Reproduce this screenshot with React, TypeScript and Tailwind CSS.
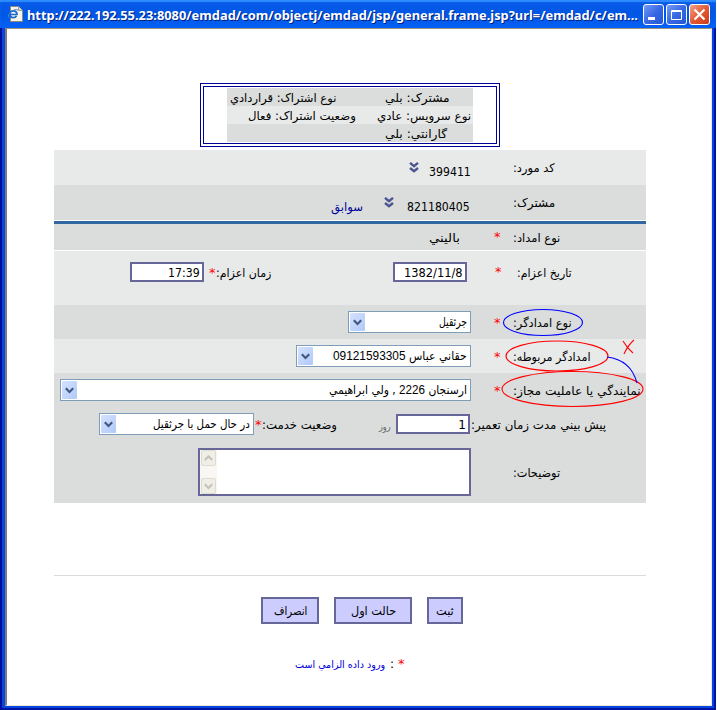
import { useLayoutEffect, useRef, type ReactNode } from "react";

/* One line of text, condensed or widened to fill its box exactly. */
function Fit({ children, className = "", ltr = false }: { children: ReactNode; className?: string; ltr?: boolean }) {
  const box = useRef<HTMLDivElement>(null);
  const text = useRef<HTMLSpanElement>(null);
  useLayoutEffect(() => {
    if (box.current && text.current) {
      text.current.style.transform = `scaleX(${box.current.clientWidth / text.current.offsetWidth})`;
    }
  }, []);
  return (
    <div ref={box} dir="ltr" className={`flex h-4 shrink-0 leading-4 ${className}`}>
      <span ref={text} dir={ltr ? "ltr" : "rtl"} className="block shrink-0 origin-left whitespace-nowrap">
        {children}
      </span>
    </div>
  );
}

function Star({ className = "" }: { className?: string }) {
  return <span className={`block h-4 w-[7px] shrink-0 text-[13px] leading-4 text-[#f00] ${className}`}>*</span>;
}

function DoubleChevron({ className }: { className: string }) {
  return (
    <svg className={`h-[11px] w-[10px] shrink-0 ${className}`} viewBox="0 0 10 11" fill="none" stroke="#4d5590" strokeWidth="2.4">
      <path d="M1 0.9 5 4.2 9 0.9M1 6 5 9.3 9 6" />
    </svg>
  );
}

function Select({ children, className }: { children: ReactNode; className: string }) {
  return (
    <div className={`flex h-[22px] shrink-0 justify-between border border-[#7f9db9] bg-white p-px ${className}`}>
      <span className="flex h-[18px] w-[15px] items-center justify-center rounded-[1px] bg-linear-to-br from-[#d5e2ff] to-[#b0c9f8]">
        <svg className="h-[7px] w-[9px]" viewBox="0 0 9 7" fill="none" stroke="#40587f" strokeWidth="2.1">
          <path d="M.8 1.2 4.5 4.9 8.2 1.2" />
        </svg>
      </span>
      {children}
    </div>
  );
}

function Input({ children, className }: { children: ReactNode; className: string }) {
  return (
    <div className={`flex h-5 w-[74px] shrink-0 justify-end border-2 border-[#666699] bg-white pr-0.5 text-[12px] ${className}`}>
      {children}
    </div>
  );
}

function ScrollButton({ up = false }: { up?: boolean }) {
  return (
    <span className="flex h-4 w-[15px] items-center justify-center rounded-[2px] border border-[#dedccf] bg-[#efeee7]">
      <svg className="h-[7px] w-[9px]" viewBox="0 0 9 7" fill="none" stroke="#c4c2b8" strokeWidth="2">
        <path d={up ? "M.8 5 4.5 1.3 8.2 5" : "M.8 1.3 4.5 5 8.2 1.3"} />
      </svg>
    </span>
  );
}

function TitleBar() {
  return (
    <header className="flex h-[28px] items-start bg-linear-to-b from-[#0c5be8] via-[#0057e5] to-[#0560f5] pl-2 shadow-[inset_0_2px_1px_#2d8cff]">
      <svg className="mt-[6px] h-4 w-[15px]" viewBox="0 0 15 16">
        <path d="M2.5.5h8l4 4v11h-12z" fill="#f7f5e9" stroke="#8a8a80" />
        <path d="M10.5.5v4h4" fill="#ddd" stroke="#999" />
        <path d="M2 8.5h7C9 3.5 2 4 2 8.2c0 4.3 5 4.3 6.5 1.7" fill="none" stroke="#1667cf" strokeWidth="1.7" />
        <path d="M.5 11.5C-1 8 6 2 10 4" fill="none" stroke="#4387d8" />
      </svg>
      <Fit ltr className="mt-[7px] ml-1 w-[611px] font-['Noto_Sans',sans-serif] text-[13px] font-bold text-white [text-shadow:1px_1px_0_#002080]">
        http://222.192.55.23:8080/emdad/com/objectj/emdad/jsp/general.frame.jsp?url=/emdad/c/em...
      </Fit>
      <div className="mt-1 ml-[5px] flex gap-[2px]">
        <span className="h-[21px] w-[21px] rounded-[3px] border border-white bg-linear-to-br from-[#769bf3] via-[#3968e5] to-[#2256d5]">
          <svg viewBox="0 0 19 19"><path d="M4 12h7v3H4z" fill="white" /></svg>
        </span>
        <span className="h-[21px] w-[21px] rounded-[3px] border border-white bg-linear-to-br from-[#769bf3] via-[#3968e5] to-[#2256d5]">
          <svg viewBox="0 0 19 19"><path d="M4.5 5.5h10v9h-10zM4.5 6.5h10" fill="none" stroke="white" /></svg>
        </span>
        <span className="h-[21px] w-[21px] rounded-[3px] border border-white bg-linear-to-br from-[#f0a089] via-[#e35a35] to-[#cc3c12]">
          <svg viewBox="0 0 19 19"><path d="m4.5 4.5 10 10m0-10-10 10" stroke="white" strokeWidth="2.2" /></svg>
        </span>
      </div>
    </header>
  );
}

function Summary() {
  return (
    <div className="ml-[193px] h-16 w-[300px] border-4 border-double border-[#000099] pt-px pl-[23px]">
      <div className="w-[246px] text-[11.5px]">
        <div className="flex h-[18px] bg-[#dadddc] pt-0.5">
          <Fit className="ml-[3px] w-[106px]">نوع اشتراک: قراردادي</Fit>
          <Fit className="ml-[49px] w-[65px]">مشترک: بلي</Fit>
        </div>
        <div className="flex h-[18px] bg-[#e8eaea] pt-0.5">
          <Fit className="ml-[21px] w-[108px]">وضعيت اشتراک: فعال</Fit>
          <Fit className="ml-[21px] w-[94px]">نوع سرويس: عادي</Fit>
        </div>
        <div className="flex h-[18px] bg-[#dadddc] pt-0.5">
          <Fit className="ml-[158px] w-[62px]">گارانتي: بلي</Fit>
        </div>
      </div>
    </div>
  );
}

function Annotations() {
  return (
    <svg className="pointer-events-none absolute top-0 left-0 h-[710px] w-[717px]" viewBox="0 0 717 710" fill="none" strokeWidth="1.1">
      <ellipse cx="543" cy="322.5" rx="39.5" ry="13" stroke="#00f" />
      <ellipse cx="557" cy="356" rx="51" ry="15" stroke="#f00" />
      <ellipse cx="572.5" cy="389" rx="70.5" ry="17.5" stroke="#f00" />
      <path d="M607 357C624 359 633 368 637 383" stroke="#00f" />
      <path d="M623 341q4 7 10 12M634 340q-6 5-10 14" stroke="#f00" />
    </svg>
  );
}

export default function App() {
  return (
    <div dir="ltr" className="relative h-[710px] w-[717px] overflow-hidden bg-white font-['DejaVu_Sans',sans-serif] text-[12px] text-black">
      <div className="h-[710px] w-[716px] rounded-t-[4px] bg-[#0019a8]">
        <TitleBar />
        <div className="h-[682px] border-r-2 border-b-2 border-l-2 border-r-[#0014a0] border-b-[#0014a0] border-l-[#000f98] bg-[#0546e2] pr-0.5 pb-0.5 pl-[3px]">
          <main className="h-[678px] w-[707px] border-t border-r border-b border-l-2 border-t-[#9c9380] border-r-[#ece9d8] border-b-[#ece9d8] border-l-[#807b70] bg-white pt-[54px]">
            <Summary />
            <section className="mt-[3px] ml-[47px] w-[592px]">
              <div className="flex h-[35px] bg-[#e8eaea]">
                <DoubleChevron className="mt-[12px] ml-[355px]" />
                <Fit ltr className="mt-[14px] ml-[10px] w-[42px]">399411</Fit>
                <Fit className="mt-[10px] ml-[42px] w-[42px]">کد مورد:</Fit>
              </div>
              <div className="flex h-[35px] bg-[#dadddc]">
                <Fit className="mt-[14px] ml-[277px] w-[32px] text-[#000099]">سوابق</Fit>
                <DoubleChevron className="mt-[12px] ml-[21px]" />
                <Fit ltr className="mt-[14px] ml-[13px] w-[63px]">821180405</Fit>
                <Fit className="mt-[10px] ml-[43px] w-[42px]">مشترک:</Fit>
              </div>
              <div className="flex h-[31px] border-t border-b border-white bg-[#dadddc] shadow-[inset_0_3px_0_#3067a0]">
                <Fit className="mt-[9px] ml-[375px] w-[31px]">باليني</Fit>
                <Star className="mt-[8px] ml-[34px]" />
                <Fit className="mt-[9px] ml-[12px] w-[47px]">نوع امداد:</Fit>
              </div>
              <div className="flex h-[54px] bg-[#e8eaea]">
                <Input className="mt-[11px] ml-[76px]">
                  <Fit ltr className="mt-px w-[32px]">17:39</Fit>
                </Input>
                <Star className="mt-[14px] ml-[5px]" />
                <Fit className="mt-[14px] w-[55px]">زمان اعزام:</Fit>
                <Input className="mt-[11px] ml-[122px]">
                  <Fit ltr className="mt-px w-[59px]">1382/11/8</Fit>
                </Input>
                <Star className="mt-[13px] ml-[28px]" />
                <Fit className="mt-[14px] ml-[15px] w-[55px]">تاريخ اعزام:</Fit>
              </div>
              <div className="flex h-[34px] bg-[#dadddc]">
                <Select className="mt-[6px] ml-[294px] w-[123px]">
                  <Fit className="mt-px mr-0.5 w-[28px]">جرثقيل</Fit>
                </Select>
                <Star className="mt-[10px] ml-[23px]" />
                <Fit className="mt-[10px] ml-[12px] w-[59px]">نوع امدادگر:</Fit>
              </div>
              <div className="flex h-[34px] bg-[#e8eaea]">
                <Select className="mt-[6px] ml-[242px] w-[175px]">
                  <Fit className="mt-px mr-0.5 w-[134px]">
                    حقاني عباس <span className="font-['Liberation_Sans',sans-serif] text-[13px]">09121593305</span>
                  </Fit>
                </Select>
                <Star className="mt-[10px] ml-[23px]" />
                <Fit className="mt-[10px] ml-[12px] w-[78px]">امدادگر مربوطه:</Fit>
              </div>
              <div className="h-[130px] bg-[#dadddc]">
                <div className="flex h-[34px]">
                  <Select className="mt-[6px] ml-[6px] w-[411px]">
                    <Fit className="mt-px mr-0.5 w-[138px]">
                      ارسنجان <span className="font-['Liberation_Sans',sans-serif] text-[13px]">2226</span> , ولي ابراهيمي
                    </Fit>
                  </Select>
                  <Star className="mt-[10px] ml-[23px]" />
                  <Fit className="mt-[10px] ml-[12px] w-[128px]">نمايندگي يا عامليت مجاز:</Fit>
                </div>
                <div className="flex h-[41px]">
                  <Select className="mt-[6px] ml-[45px] w-[155px]">
                    <Fit className="mt-px mr-0.5 w-[97px]">در حال حمل با جرثقيل</Fit>
                  </Select>
                  <Star className="mt-[10px] ml-px" />
                  <Fit className="mt-[10px] w-[75px]">وضعيت خدمت:</Fit>
                  <Fit className="mt-[12px] ml-[42px] w-[12px] text-[10px] text-[#666]">روز</Fit>
                  <Input className="mt-[7px] ml-[5px]">
                    <span className="mt-px leading-4">1</span>
                  </Input>
                  <Fit className="mt-[10px] ml-px w-[135px]">پيش بيني مدت زمان تعمير:</Fit>
                </div>
                <div className="flex h-12">
                  <div className="ml-[144px] flex w-[273px] border-2 border-[#666699] bg-white">
                    <div className="flex w-[17px] flex-col items-center justify-between bg-[#f8f7f3]">
                      <ScrollButton up />
                      <ScrollButton />
                    </div>
                  </div>
                  <Fit className="mt-[17px] ml-[42px] w-[47px]">توضيحات:</Fit>
                </div>
              </div>
            </section>
            <hr className="mt-[72px] ml-[47px] w-[592px] border-t border-[#dcdcdc]" />
            <div className="mt-[21px] ml-[254px] flex gap-[15px]">
              <button className="flex h-[27px] w-[58px] justify-center border-2 border-[#666699] bg-[#ccccff] pt-[4px]">
                <Fit className="w-[33px]">انصراف</Fit>
              </button>
              <button className="flex h-[27px] w-[78px] justify-center border-2 border-[#666699] bg-[#ccccff] pt-[4px]">
                <Fit className="w-[45px]">حالت اول</Fit>
              </button>
              <button className="flex h-[27px] w-9 justify-center border-2 border-[#666699] bg-[#ccccff] pt-[4px]">
                <Fit className="w-[18px]">ثبت</Fit>
              </button>
            </div>
            <div className="mt-[32px] ml-[288px] flex">
              <Fit className="mt-px w-[90px] text-[10px] text-[#0000dd]">ورود داده الزامي است</Fit>
              <span className="ml-[5px] w-[7px] leading-4">:</span>
              <Star className="ml-px" />
            </div>
          </main>
        </div>
      </div>
      <Annotations />
    </div>
  );
}
